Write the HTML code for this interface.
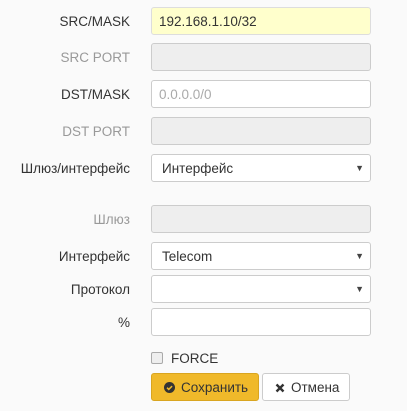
<!DOCTYPE html>
<html><head><style>
body{margin:0;width:407px;height:411px;background:#fafafa;font-family:"Liberation Sans",sans-serif;font-size:13.5px;color:#333;position:relative;overflow:hidden}
.l{position:absolute;right:277px;text-align:right;white-space:nowrap;line-height:30px}
.g{color:#999}
.i{position:absolute;left:151px;width:218px;height:26px;border:1px solid #ccc;border-radius:3px;background:#fff;box-sizing:content-box;line-height:28px;padding-left:0}
.i span{padding-left:10px}
.d{background:#eee}
.y{background:#ffffcc;border-color:#ddd}
.ar{position:absolute;right:6px;top:0;font-size:9px;color:#444;line-height:26px}
.btn{position:absolute;top:373px;height:26px;border:1px solid #ccc;border-radius:3px;line-height:28px;font-size:13.5px}
</style></head><body>
<div class="l" style="top:7px">SRC/MASK</div><div class="i y" style="top:7px"><span style="padding-left:7px">192.168.1.10/32</span></div>
<div class="l g" style="top:43px">SRC PORT</div><div class="i d" style="top:43px"></div>
<div class="l" style="top:80px">DST/MASK</div><div class="i" style="top:80px"><span style="padding-left:7px;color:#aaa">0.0.0.0/0</span></div>
<div class="l g" style="top:117px">DST PORT</div><div class="i d" style="top:117px"></div>
<div class="l" style="top:154px">Шлюз/интерфейс</div><div class="i" style="top:154px"><span>Интерфейс</span><span class="ar">▼</span></div>
<div class="l g" style="top:205px">Шлюз</div><div class="i d" style="top:205px"></div>
<div class="l" style="top:242px">Интерфейс</div><div class="i" style="top:242px"><span>Telecom</span><span class="ar">▼</span></div>
<div class="l" style="top:275px">Протокол</div><div class="i" style="top:275px"><span class="ar">▼</span></div>
<div class="l" style="top:308px">%</div><div class="i" style="top:308px"></div>
<div style="position:absolute;left:151px;top:352px;width:10px;height:10px;border:1px solid #aaa;border-radius:2px;background:#eee"></div>
<div style="position:absolute;left:171px;top:351px;line-height:16px">FORCE</div>
<div class="btn" style="left:151px;width:106px;background:#f0b92a;border-color:#d9a520">
<svg style="position:absolute;left:12px;top:8px" width="11" height="11" viewBox="0 0 12 12"><circle cx="6" cy="6" r="6" fill="#333"/><path d="M3.3 6.2l1.9 1.9 3.6-3.6" stroke="#f0b92a" stroke-width="1.7" fill="none"/></svg>
<span style="position:absolute;left:29px">Сохранить</span></div>
<div class="btn" style="left:262px;width:86px;background:#fff">
<svg style="position:absolute;left:12px;top:9px" width="10" height="10" viewBox="0 0 10 10"><path d="M1.5 1.5l7 7M8.5 1.5l-7 7" stroke="#333" stroke-width="2.4"/></svg>
<span style="position:absolute;left:28px">Отмена</span></div>
</body></html>
